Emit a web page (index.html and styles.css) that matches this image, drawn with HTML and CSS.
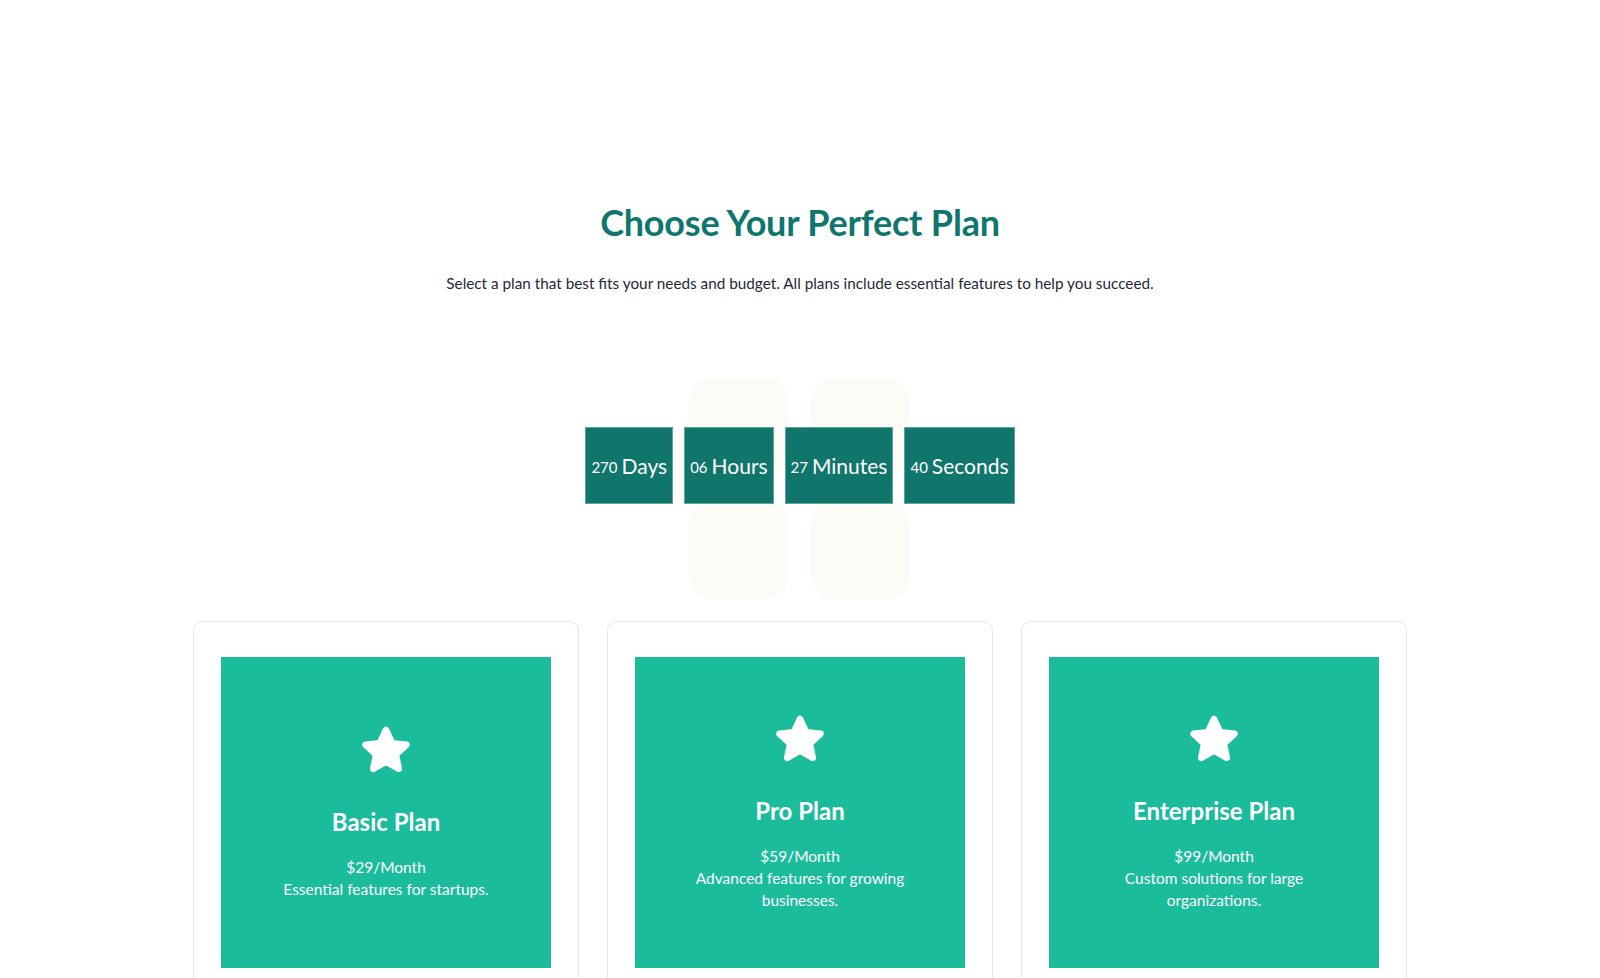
FILE: index.html
```html
<!DOCTYPE html>
<html lang="en">
<head>
<meta charset="utf-8">
<title>Choose Your Perfect Plan</title>
<link rel="stylesheet" href="styles.css">
</head>
<body>
<main class="pricing">
  <header class="intro">
    <h1 class="title">Choose Your Perfect Plan</h1>
    <p class="subtitle">Select a plan that best fits your needs and budget. All plans include essential features to help you succeed.</p>
  </header>

  <div class="countdown">
    <span class="decor decor-a-top"></span>
    <span class="decor decor-a-bottom"></span>
    <span class="decor decor-b-top"></span>
    <span class="decor decor-b-bottom"></span>
    <div class="cd-box"><span class="cd-num">270</span><span class="cd-label">Days</span></div>
    <div class="cd-box"><span class="cd-num">06</span><span class="cd-label">Hours</span></div>
    <div class="cd-box"><span class="cd-num">27</span><span class="cd-label">Minutes</span></div>
    <div class="cd-box"><span class="cd-num">40</span><span class="cd-label">Seconds</span></div>
  </div>

  <section class="plans">
    <article class="card">
      <div class="plan">
        <svg class="star" viewBox="0 0 52 49" aria-hidden="true"><path d="M26 4 L32.2 17.2 L46.5 18.8 L35.9 28.6 L38.8 42.8 L26 35.6 L13.2 42.8 L16.1 28.6 L5.5 18.8 L19.8 17.2 Z" fill="#fff" stroke="#fff" stroke-width="6.5" stroke-linejoin="round"/></svg>
        <h2 class="plan-name">Basic Plan</h2>
        <p class="plan-text">$29/Month<br>Essential features for startups.</p>
      </div>
    </article>
    <article class="card">
      <div class="plan">
        <svg class="star" viewBox="0 0 52 49" aria-hidden="true"><path d="M26 4 L32.2 17.2 L46.5 18.8 L35.9 28.6 L38.8 42.8 L26 35.6 L13.2 42.8 L16.1 28.6 L5.5 18.8 L19.8 17.2 Z" fill="#fff" stroke="#fff" stroke-width="6.5" stroke-linejoin="round"/></svg>
        <h2 class="plan-name">Pro Plan</h2>
        <p class="plan-text">$59/Month<br>Advanced features for growing businesses.</p>
      </div>
    </article>
    <article class="card">
      <div class="plan">
        <svg class="star" viewBox="0 0 52 49" aria-hidden="true"><path d="M26 4 L32.2 17.2 L46.5 18.8 L35.9 28.6 L38.8 42.8 L26 35.6 L13.2 42.8 L16.1 28.6 L5.5 18.8 L19.8 17.2 Z" fill="#fff" stroke="#fff" stroke-width="6.5" stroke-linejoin="round"/></svg>
        <h2 class="plan-name">Enterprise Plan</h2>
        <p class="plan-text">$99/Month<br>Custom solutions for large organizations.</p>
      </div>
    </article>
  </section>
</main>
</body>
</html>
```

FILE: styles.css
```css
* { box-sizing: border-box; }

html, body {
  margin: 0;
  padding: 0;
  background: #ffffff;
}

body {
  font-family: "Lato", "Noto Sans", "Liberation Sans", sans-serif;
  color: #1f2937;
}

.pricing {
  display: flex;
  flex-direction: column;
  align-items: center;
  padding-top: 198px;
}

.intro {
  text-align: center;
}

.title {
  margin: 0;
  font-size: 36px;
  line-height: 48px;
  font-weight: 700;
  color: #0f766e;
  letter-spacing: -0.2px;
}

.subtitle {
  margin: 25px 0 0;
  font-size: 15.3px;
  line-height: 24px;
  color: #1f2937;
}

.countdown {
  position: relative;
  display: flex;
  gap: 11px;
  margin-top: 132px;
}

.decor {
  position: absolute;
  left: 50%;
  width: 99px;
  height: 97px;
  border-radius: 22px;
  background: #fcfbf5;
  z-index: 0;
}
.decor-a-top { margin-left: -111px; top: -49px; }
.decor-a-bottom { margin-left: -111px; top: 75px; }
.decor-b-top { margin-left: 11px; top: -49px; }
.decor-b-bottom { margin-left: 11px; top: 75px; }

.cd-box {
  position: relative;
  z-index: 1;
  height: 77px;
  padding: 0 5px;
  display: flex;
  align-items: center;
  justify-content: center;
  gap: 4px;
  background: #10766c;
  border: 1px solid #5fa59d;
  color: #ffffff;
  white-space: nowrap;
}

.cd-num {
  font-size: 15px;
  line-height: 1;
  padding-top: 4px;
}

.cd-label {
  font-size: 21px;
  line-height: 1;
}

.plans {
  display: grid;
  grid-template-columns: repeat(3, 386px);
  gap: 28px;
  margin-top: 117px;
}

.card {
  border: 1px solid #e3e8ef;
  border-radius: 10px;
  padding: 35px 27px 60px;
  background: #ffffff;
  min-height: 420px;
}

.plan {
  height: 311px;
  padding: 0 40px;
  background: #1abc9c;
  color: #ffffff;
  display: flex;
  flex-direction: column;
  align-items: center;
  justify-content: center;
  text-align: center;
}

.star {
  width: 52px;
  height: 49px;
  display: block;
}

.plan-name {
  margin: 31px 0 0;
  font-size: 24px;
  line-height: 32px;
  font-weight: 700;
}

.plan-text {
  margin: 18px 0 0;
  font-size: 15.5px;
  line-height: 22px;
}
```
